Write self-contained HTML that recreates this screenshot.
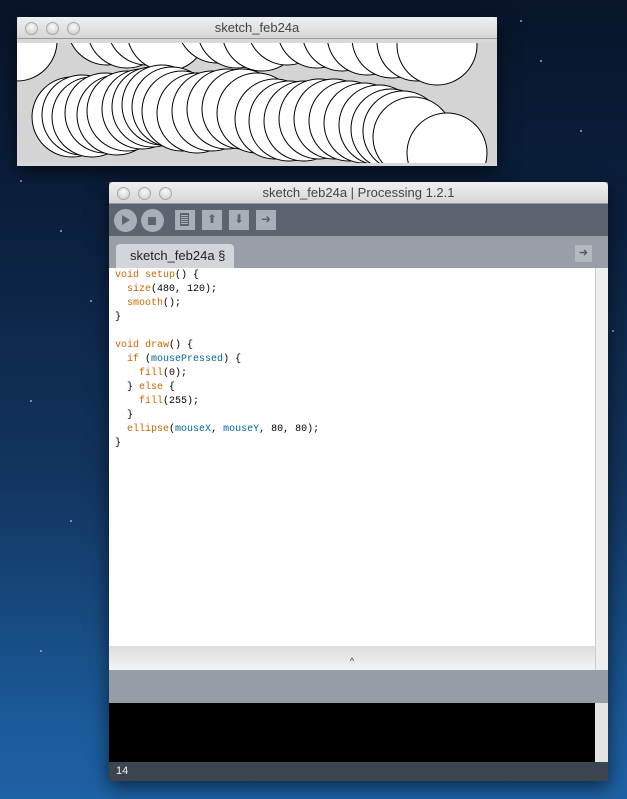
<!DOCTYPE html>
<html><head><style>
*{margin:0;padding:0;box-sizing:border-box}
body{width:627px;height:799px;overflow:hidden;position:relative;
background:linear-gradient(180deg,#08152a 0%,#0b2140 30%,#12355f 60%,#1b5a98 90%,#1d62a5 100%);
font-family:"Liberation Sans",sans-serif}
.star{position:absolute;width:2px;height:2px;background:#cfe0ff;border-radius:1px;opacity:.7}
.win{position:absolute;box-shadow:0 6px 18px rgba(0,0,0,.6)}
.title{position:absolute;left:0;right:0;top:0;height:22px;background:linear-gradient(#f0f0f0,#d6d6d6);border-bottom:1px solid #999;text-align:center;font-size:13px;color:#444;line-height:22px;border-radius:4px 4px 0 0}
.tl{position:absolute;top:5px;width:13px;height:13px;border-radius:50%;background:radial-gradient(circle at 50% 35%,#fafafa,#c8c8c8);border:1px solid #a8a8a8}
.code{position:absolute;left:115px;top:269px;font-family:"Liberation Mono",monospace;font-size:10px;line-height:14px;white-space:pre;color:#000}
.k{color:#cc6600}.b{color:#006699}
.btn{position:absolute;top:210px;width:20px;height:20px;background:#a9afb7}
</style></head><body>
<div class="star" style="left:540px;top:60px"></div><div class="star" style="left:580px;top:130px"></div><div class="star" style="left:60px;top:230px"></div><div class="star" style="left:30px;top:400px"></div><div class="star" style="left:70px;top:520px"></div><div class="star" style="left:612px;top:330px"></div><div class="star" style="left:40px;top:650px"></div><div class="star" style="left:520px;top:20px"></div><div class="star" style="left:90px;top:300px"></div><div class="star" style="left:20px;top:180px"></div>

<div class="win" style="left:17px;top:17px;width:480px;height:149px;background:#d8d8d8">
<div class="title" style="height:22px">sketch_feb24a</div>
<div class="tl" style="left:8px"></div><div class="tl" style="left:29px"></div><div class="tl" style="left:50px"></div>
<svg style="position:absolute;left:0;top:26px" width="480" height="120" viewBox="0 0 480 120">
<rect width="480" height="120" fill="#d4d4d4"/>
<g fill="#fff" stroke="#000" stroke-width="1">
<circle cx="0" cy="-2" r="40"/>
<circle cx="90" cy="-18" r="40"/><circle cx="110" cy="-15" r="40"/><circle cx="130" cy="-18" r="40"/><circle cx="150" cy="-12" r="40"/>
<circle cx="200" cy="-20" r="40"/><circle cx="220" cy="-15" r="40"/><circle cx="245" cy="-12" r="40"/><circle cx="270" cy="-18" r="40"/>
<circle cx="300" cy="-15" r="40"/><circle cx="325" cy="-12" r="40"/><circle cx="350" cy="-8" r="40"/><circle cx="375" cy="-5" r="40"/><circle cx="400" cy="-2" r="40"/><circle cx="420" cy="2" r="40"/>
<circle cx="55" cy="74" r="40"/><circle cx="65" cy="72" r="40"/><circle cx="75" cy="74" r="40"/><circle cx="88" cy="70" r="40"/><circle cx="100" cy="72" r="40"/><circle cx="110" cy="68" r="40"/>
<circle cx="125" cy="66" r="40"/><circle cx="135" cy="64" r="40"/><circle cx="145" cy="62" r="40"/><circle cx="155" cy="64" r="40"/><circle cx="165" cy="68" r="40"/>
<circle cx="180" cy="70" r="40"/><circle cx="195" cy="68" r="40"/><circle cx="210" cy="66" r="40"/><circle cx="225" cy="66" r="40"/><circle cx="240" cy="70" r="40"/>
<circle cx="258" cy="76" r="40"/><circle cx="272" cy="78" r="40"/><circle cx="287" cy="78" r="40"/><circle cx="302" cy="76" r="40"/><circle cx="317" cy="76" r="40"/>
<circle cx="332" cy="78" r="40"/><circle cx="347" cy="80" r="40"/><circle cx="362" cy="82" r="40"/><circle cx="374" cy="86" r="40"/><circle cx="386" cy="88" r="40"/><circle cx="396" cy="94" r="40"/>
<circle cx="430" cy="110" r="40"/>
</g></svg>
</div>

<div class="win" style="left:109px;top:182px;width:499px;height:599px;background:#5c6470">
<div class="title">sketch_feb24a | Processing 1.2.1</div>
<div class="tl" style="left:8px"></div><div class="tl" style="left:29px"></div><div class="tl" style="left:50px"></div>
<div style="position:absolute;left:0;top:54px;width:499px;height:32px;background:#9a9fa7"></div>
<div style="position:absolute;left:7px;top:62px;width:118px;height:24px;background:#d2d6da;border-radius:4px 4px 0 0;font-size:13px;line-height:24px;padding-left:14px;color:#222">sketch_feb24a §</div>
<div style="position:absolute;left:466px;top:63px;width:17px;height:17px;background:#b5bac0;color:#555;font-size:11px;text-align:center;line-height:17px">➜</div>
<div style="position:absolute;left:0;top:86px;width:486px;height:378px;background:#fff"></div>
<div style="position:absolute;left:486px;top:86px;width:13px;height:402px;background:#eee;border-left:1px solid #ccc"></div>
<div style="position:absolute;left:0;top:464px;width:486px;height:24px;background:linear-gradient(#ddd,#f4f4f4);font-size:9px;text-align:center;color:#333;line-height:30px">^</div>
<div style="position:absolute;left:0;top:488px;width:499px;height:33px;background:#979da5"></div>
<div style="position:absolute;left:0;top:521px;width:486px;height:59px;background:#000"></div>
<div style="position:absolute;left:486px;top:521px;width:13px;height:59px;background:#e4e4e4"></div>
<div style="position:absolute;left:0;top:580px;width:499px;height:19px;background:#3c4450;color:#eee;font-size:11px;line-height:19px;padding-left:7px">14</div>
</div>
<div style="position:absolute;left:114px;top:209px;width:23px;height:23px;border-radius:50%;background:#a9afb7"></div>
<div style="position:absolute;left:141px;top:209px;width:23px;height:23px;border-radius:50%;background:#a9afb7"></div>
<div style="position:absolute;left:122px;top:215px;width:0;height:0;border-left:8px solid #5c6470;border-top:5px solid transparent;border-bottom:5px solid transparent"></div>
<div style="position:absolute;left:148px;top:217px;width:8px;height:8px;background:#5c6470"></div>
<div class="btn" style="left:175px"></div><div class="btn" style="left:202px"></div><div class="btn" style="left:229px"></div><div class="btn" style="left:256px"></div>
<div style="position:absolute;left:180px;top:213px;width:9px;height:13px;border:1px solid #5c6470;background:repeating-linear-gradient(#5c6470 0 1px,transparent 1px 2px)"></div>
<div style="position:absolute;left:202px;top:210px;width:20px;color:#5c6470;font-size:12px;text-align:center;line-height:18px">⬆</div>
<div style="position:absolute;left:229px;top:210px;width:20px;color:#5c6470;font-size:12px;text-align:center;line-height:18px">⬇</div>
<div style="position:absolute;left:256px;top:210px;width:20px;color:#5c6470;font-size:12px;text-align:center;line-height:19px">➜</div>

<div class="code"><span class="k">void</span> <span class="k">setup</span>() {
  <span class="k">size</span>(480, 120);
  <span class="k">smooth</span>();
}

<span class="k">void</span> <span class="k">draw</span>() {
  <span class="k">if</span> (<span class="b">mousePressed</span>) {
    <span class="k">fill</span>(0);
  } <span class="k">else</span> {
    <span class="k">fill</span>(255);
  }
  <span class="k">ellipse</span>(<span class="b">mouseX</span>, <span class="b">mouseY</span>, 80, 80);
}</div>
</body></html>
